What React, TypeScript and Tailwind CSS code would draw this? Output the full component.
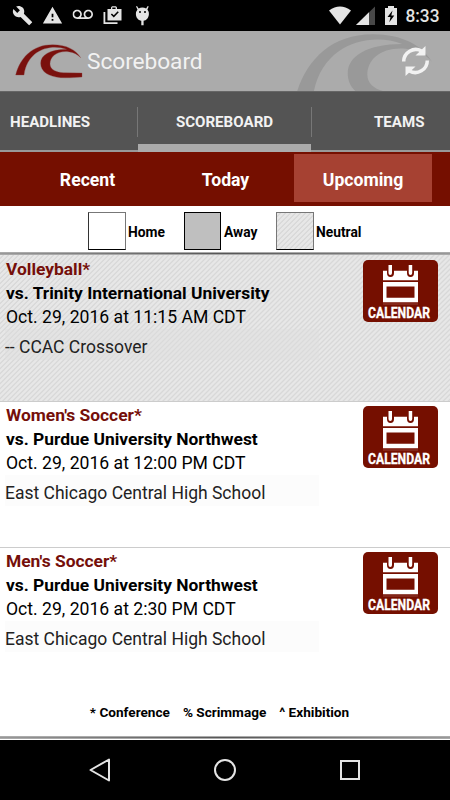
import { MdBuild, MdWarning, MdVoicemail } from 'react-icons/md';

const games = [
    { sport: 'Volleyball*', opponent: 'vs. Trinity International University', date: 'Oct. 29, 2016 at 11:15 AM CDT', place: '-- CCAC Crossover', neutral: true },
    { sport: "Women's Soccer*", opponent: 'vs. Purdue University Northwest', date: 'Oct. 29, 2016 at 12:00 PM CDT', place: 'East Chicago Central High School', neutral: false },
    { sport: "Men's Soccer*", opponent: 'vs. Purdue University Northwest', date: 'Oct. 29, 2016 at 2:30 PM CDT', place: 'East Chicago Central High School', neutral: false },
];

const stripes = 'bg-[repeating-linear-gradient(135deg,#e7e7e7_0px,#e7e7e7_1.4px,#d8d8d8_2.3px,#d8d8d8_2.8px,#e7e7e7_3.54px)]';

const wavePath =
    'M47 225C60 175 95 134 158 134C200 134 228 150 242 173C232 163 222 157 205 155C170 152 150 170 150 192C150 210 170 217 190 218L246 219V231C225 233 200 234 182 233C145 230 122 215 122 190C122 165 150 148 200 148C150 130 82 150 72 225Z';

function StatusBar() {
    return (
        <div className="flex h-[31px] shrink-0 items-center bg-black text-[#e4e4e4]">
            <svg width="450" height="31" viewBox="0 0 450 31" fill="currentColor">
                <MdBuild x="12" y="5" size={21} />
                <MdWarning x="42" y="5" size={21} />
                <MdVoicemail x="72.500" y="4.500" size={20.5} />
                {/* Shopping bag with check */}
                <path d="M103.500 12v12h14v-1.800h-12.200V12z" />
                <path fillRule="evenodd" d="M107.500 9h3.500V7.500l1-1.200h4l1 1.200V9h4.500v11.500h-14zM112.300 9h3.300V7.500h-3.300zM110.800 14.500l3 3 5-5.200-1.100-1-3.900 4-1.900-1.900z" />
                {/* Android head */}
                <path fillRule="evenodd" d="M136 6.500l1-.5 1.600 2.600a7 7 0 0 1 7.500 0L147.700 6l1 .5-1.300 3a7 7 0 0 1 1.500 4.500c0 3.700-2.600 6.500-5.300 6.800V25.300h-2.300V20.800c-3-.4-5.400-3.200-5.400-6.800a7 7 0 0 1 1.600-4.500zM139 12a1 1 0 1 0 2 0a1 1 0 1 0-2 0M144 12a1 1 0 1 0 2 0a1 1 0 1 0-2 0" />
                {/* Wifi, signal, battery */}
                <path d="M329 10.500Q340 2.500 351 10.500L340 24.500z" />
                <path d="M356 25L375 6.500V25z" fill="#484848" />
                <path d="M356 25L369 12.300V25z" />
                <path fillRule="evenodd" d="M385 8h3V6h6v2h3v17h-12zM392.500 10.500l-5 6.500h3l-1.200 5.200 5-6.800h-3z" />
                <text x="405.500" y="22.300" fontSize="17.500" fontFamily="Roboto" fontWeight="500" textLength="34" lengthAdjust="spacingAndGlyphs">8:33</text>
            </svg>
        </div>
    );
}

function Header() {
    return (
        <header className="relative h-[60px] shrink-0 overflow-hidden bg-[#ababab]">
            <svg className="absolute inset-0" width="450" height="60" viewBox="0 93 1350 180">
                <path d={wavePath} fill="#999" transform="translate(787 -179) scale(2.1)" />
                <path d={wavePath} fill="#7a100d" stroke="#8d4a48" strokeWidth="1" />
            </svg>
            <div className="relative flex h-full items-center justify-between pr-[19px] pl-[87px]">
                <h1 className="pt-[3px] text-[22.700px] tracking-[-0.050px] text-[#f2f2f2]">Scoreboard</h1>
                <svg width="30" height="32" viewBox="0 0 30 32" fill="none" stroke="#f2f2f2" strokeWidth="3.500">
                    <path d="M2.700 16.500A12 12 0 0 1 20.500 6" />
                    <path d="M26.300 15.500A12 12 0 0 1 8.500 26" />
                    <path d="M24.500 1v9.500h-10z" fill="#f2f2f2" stroke="none" />
                    <path d="M4.500 31v-9.500h10z" fill="#f2f2f2" stroke="none" />
                </svg>
            </div>
        </header>
    );
}

function Tabs() {
    return (
        <nav className="flex h-[61px] shrink-0 border-t border-[#666] bg-[#545454] text-[15.100px] font-bold text-[#f2f2f2]">
            <div className="flex w-[138px] items-center border-b-2 border-[#999] pt-[3px] pl-[10px]">HEADLINES</div>
            <div className="flex w-[173px] flex-col">
                <div className="-mx-px flex flex-1 items-center justify-between pt-[8px]">
                    <span className="h-[30px] w-px bg-[#777]" />
                    <span>SCOREBOARD</span>
                    <span className="h-[30px] w-px bg-[#777]" />
                </div>
                <div className="h-[8px] bg-[#ababab]" />
            </div>
            <div className="flex flex-1 items-center justify-end border-b-2 border-[#999] pt-[3px] pr-[25.500px]">TEAMS</div>
        </nav>
    );
}

function CalendarButton() {
    return (
        <button className="block h-[62px] w-[75px] shrink-0">
            <svg width="75" height="62" viewBox="0 0 75 62">
                <rect width="75" height="62" rx="5" fill="#750f00" />
                <path d="M20 10.700h35v9.600H20z" fill="#fff" />
                <path d="M24 4.500v8.500q0 4 3.500 4t3.500-4V4.500zM44 4.500v8.500q0 4 3.500 4t3.500-4V4.500z" fill="#750f00" />
                <path d="M25.500 5h3.500v8q0 2-1.750 2t-1.750-2zM45.700 5h3.500v8q0 2-1.750 2t-1.750-2z" fill="#fff" />
                <path fillRule="evenodd" d="M20 22h35v20.300H20zM23.500 26.500v11.300h28V26.500z" fill="#fff" />
                <path d="M20 43.500h35v1H20z" fill="#934034" />
                <text x="5" y="57.500" fontSize="14" fontFamily="Roboto" fontWeight="700" fill="#fff" stroke="#fff" strokeWidth="0.300" textLength="62" lengthAdjust="spacingAndGlyphs">CALENDAR</text>
            </svg>
        </button>
    );
}

function Legend() {
    return (
        <div className="flex h-[46px] shrink-0 items-center bg-white pt-[4px] pl-[88px] text-[13.800px] font-bold">
            <span className="mr-[2px] h-[38px] w-[38px] border border-t-[#777] border-r-[#777] border-b-black border-l-[#333] bg-white" />
            <span className="w-[56px] pt-[2px]">Home</span>
            <span className="mr-[3px] h-[38px] w-[37px] border border-black bg-[#bfbfbf]" />
            <span className="w-[52px] pt-[2px]">Away</span>
            <span className={`mr-[2px] h-[38px] w-[38px] border border-[#777] border-b-black ${stripes}`} />
            <span className="pt-[2px]">Neutral</span>
        </div>
    );
}

function Rule() {
    return <div className="h-[3px] shrink-0 border-y border-[#aaa] bg-linear-to-r from-[#999] via-[#555] to-[#999]" />;
}

export default function App() {
    return (
        <div className="flex h-[800px] w-[450px] flex-col overflow-hidden bg-white font-['Roboto',sans-serif] text-black">
            <StatusBar />
            <Header />
            <Tabs />

            {/* Schedule filter */}
            <div className="flex h-[54px] shrink-0 bg-[#750f00] pl-[18px] pt-[2px] text-[17.600px] font-bold text-white">
                <div className="flex h-[48px] w-[139px] items-center justify-center pt-[4px]">Recent</div>
                <div className="flex h-[48px] w-[137px] items-center justify-center pt-[4px]">Today</div>
                <div className="flex h-[48px] w-[138px] items-center justify-center bg-[#a64132] pt-[4px]">Upcoming</div>
            </div>

            <Legend />
            <Rule />

            {games.map((game) => (
                <div key={game.sport} className={`flex h-[146px] shrink-0 items-start justify-between pr-[12.500px] pl-[6px] ${game.neutral ? `pt-[3px] ${stripes}` : 'border-t border-[#ccc] bg-white pt-[2px]'}`}>
                    <div className="text-[17.600px] leading-[23.800px] whitespace-nowrap">
                        <div className="text-[17.400px] font-bold text-[#750f0a]">{game.sport}</div>
                        <div className="text-[17.400px] font-bold">{game.opponent}</div>
                        <div>{game.date}</div>
                        <div className={`-ml-px h-[31px] w-[314px] pt-[7px] text-[17.500px] text-[#222] ${game.neutral ? 'bg-[#dfdfdf]/40' : 'bg-[#fcfcfc]'}`}>{game.place}</div>
                    </div>
                    <div className="pt-[2px]">
                        <CalendarButton />
                    </div>
                </div>
            ))}

            <div className="flex h-[43px] shrink-0 justify-center gap-[13px] pt-[9px] pr-[11px] text-[13.600px] font-bold">
                <span>* Conference</span>
                <span>% Scrimmage</span>
                <span>^ Exhibition</span>
            </div>
            <Rule />

            <div className="mt-px flex h-[60px] shrink-0 items-center justify-between bg-black px-[88px]">
                <svg width="24" height="26" viewBox="0 0 24 26" fill="none" stroke="#e4e4e4" strokeWidth="2" strokeLinejoin="round">
                    <path d="M2.500 13L21 2.500v21z" />
                </svg>
                <svg width="24" height="24" viewBox="0 0 24 24" fill="none" stroke="#e4e4e4" strokeWidth="2">
                    <circle cx="12" cy="12" r="10" />
                </svg>
                <svg width="24" height="24" viewBox="0 0 24 24" fill="none" stroke="#e4e4e4" strokeWidth="2">
                    <rect x="3" y="3" width="18" height="18" />
                </svg>
            </div>
        </div>
    );
}
